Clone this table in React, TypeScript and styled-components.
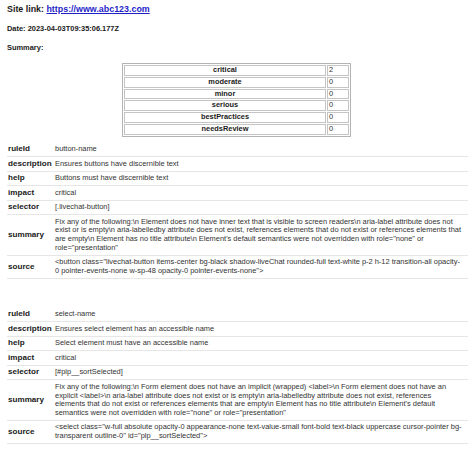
import React from "react";
import styled, { createGlobalStyle } from "styled-components";

const GlobalStyle = createGlobalStyle`
  html, body { margin: 0; padding: 0; background: #ffffff; }
  body { font-family: "Liberation Sans", Arial, sans-serif; color: #1a1a1a; }
`;

const Page = styled.div`
  display: flex;
  flex-direction: column;
  padding: 4px 6px 0 7px;
`;

const SiteLine = styled.div`
  font-size: 8.9px;
  line-height: 11px;
  font-weight: bold;
  height: 11px;
`;

const Link = styled.a`
  color: #1f1fc8;
  text-decoration: underline;
`;

const MetaLine = styled.div<{ $top: number }>`
  font-size: 7.45px;
  line-height: 10px;
  font-weight: bold;
  margin-top: ${(p) => p.$top}px;
`;

const SummaryTable = styled.table`
  align-self: center;
  margin: 10px 0 0 -2px;
  width: 229px;
  border: 1px solid #b4b4b4;
  border-spacing: 1px;
  font-size: 7.4px;
`;

const SumName = styled.td`
  border: 1px solid #c4c4c4;
  font-weight: bold;
  text-align: center;
  line-height: 8.8px;
  padding: 0;
  width: 200px;
`;

const SumCount = styled.td`
  border: 1px solid #c4c4c4;
  line-height: 8.8px;
  padding: 0 0 0 1px;
  color: #333;
`;

const DetailTable = styled.table<{ $top: number }>`
  width: 461px;
  border-collapse: collapse;
  margin-top: ${(p) => p.$top}px;
`;

const Row = styled.tr`
  border-bottom: 1px solid #e6e6e6;
`;

const Label = styled.th`
  text-align: left;
  vertical-align: middle;
  font-size: 8.1px;
  font-weight: bold;
  color: #1a1a1a;
  width: 46px;
  padding: 2.4px 0 2.4px 1px;
  line-height: 8.7px;
  white-space: nowrap;
`;

const Value = styled.td`
  font-size: 7.45px;
  line-height: 8.7px;
  color: #333;
  padding: 2.4px 6px 2.4px 1px;
  vertical-align: middle;
`;

type Issue = {
  ruleId: string;
  description: string;
  help: string;
  impact: string;
  selector: string;
  summary: string;
  source: string;
};

const issues: Issue[] = [
  {
    ruleId: "button-name",
    description: "Ensures buttons have discernible text",
    help: "Buttons must have discernible text",
    impact: "critical",
    selector: "[.livechat-button]",
    summary:
      'Fix any of the following:\\n Element does not have inner text that is visible to screen readers\\n aria-label attribute does not exist or is empty\\n aria-labelledby attribute does not exist, references elements that do not exist or references elements that are empty\\n Element has no title attribute\\n Element\'s default semantics were not overridden with role="none" or role="presentation"',
    source:
      '<button class="livechat-button items-center bg-black shadow-liveChat rounded-full text-white p-2 h-12 transition-all opacity-0 pointer-events-none w-sp-48 opacity-0 pointer-events-none">',
  },
  {
    ruleId: "select-name",
    description: "Ensures select element has an accessible name",
    help: "Select element must have an accessible name",
    impact: "critical",
    selector: "[#plp__sortSelected]",
    summary:
      'Fix any of the following:\\n Form element does not have an implicit (wrapped) <label>\\n Form element does not have an explicit <label>\\n aria-label attribute does not exist or is empty\\n aria-labelledby attribute does not exist, references elements that do not exist or references elements that are empty\\n Element has no title attribute\\n Element\'s default semantics were not overridden with role="none" or role="presentation"',
    source:
      '<select class="w-full absolute opacity-0 appearance-none text-value-small font-bold text-black uppercase cursor-pointer bg-transparent outline-0" id="plp__sortSelected">',
  },
];

const counts: [string, number][] = [
  ["critical", 2],
  ["moderate", 0],
  ["minor", 0],
  ["serious", 0],
  ["bestPractices", 0],
  ["needsReview", 0],
];

const fields: (keyof Issue)[] = ["ruleId", "description", "help", "impact", "selector", "summary", "source"];

export default function App() {
  return (
    <>
      <GlobalStyle />
      <Page>
        <SiteLine>
          Site link: <Link href="#">https://www.abc123.com</Link>
        </SiteLine>
        <MetaLine $top={9}>Date: 2023-04-03T09:35:06.177Z</MetaLine>
        <MetaLine $top={9}>Summary:</MetaLine>
        <SummaryTable>
          <tbody>
            {counts.map(([name, n]) => (
              <tr key={name}>
                <SumName>{name}</SumName>
                <SumCount>{n}</SumCount>
              </tr>
            ))}
          </tbody>
        </SummaryTable>
        {issues.map((issue, i) => (
          <DetailTable key={issue.ruleId} $top={i === 0 ? 6 : 29}>
            <tbody>
              {fields.map((f) => (
                <Row key={f}>
                  <Label>{f}</Label>
                  <Value>{issue[f]}</Value>
                </Row>
              ))}
            </tbody>
          </DetailTable>
        ))}
      </Page>
    </>
  );
}
